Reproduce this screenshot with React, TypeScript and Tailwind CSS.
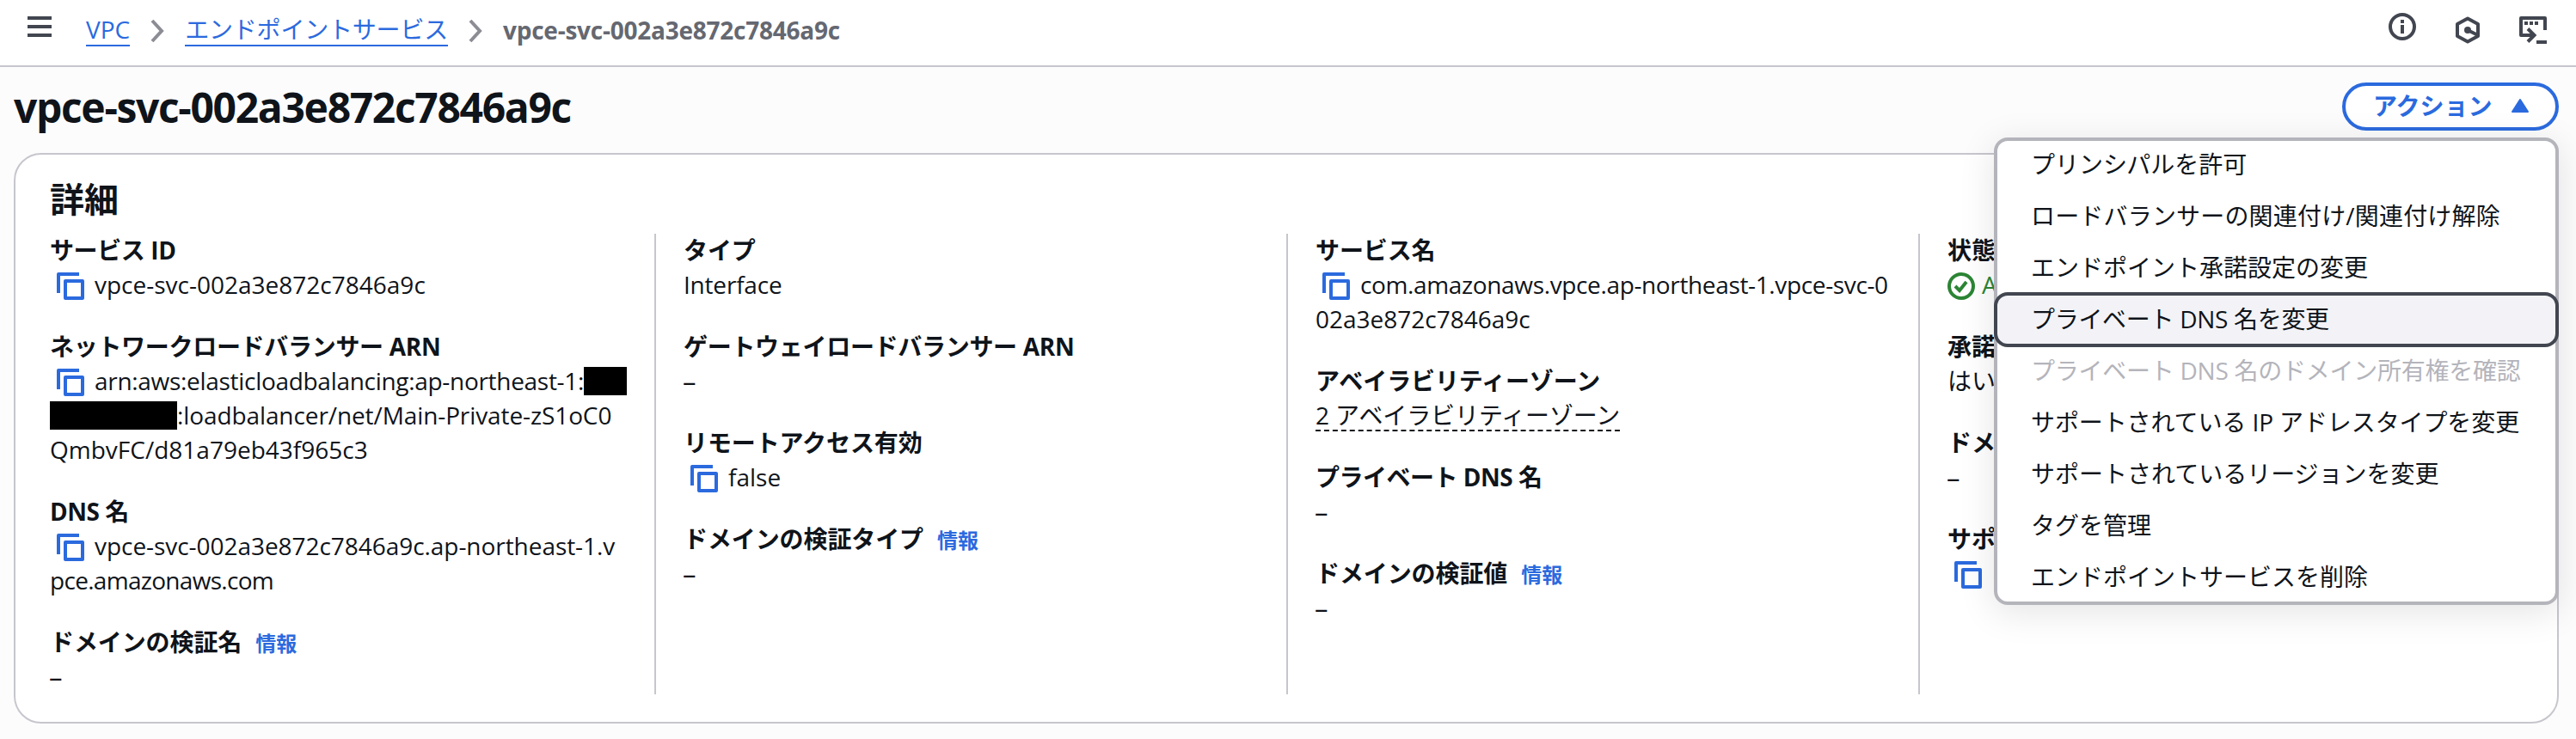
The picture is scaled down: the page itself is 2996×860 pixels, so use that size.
import type { ReactNode } from 'react'

type MenuItem = { text: string; state?: 'active' | 'disabled'; tracking?: string }

const MENU: MenuItem[] = [
  { text: 'プリンシパルを許可' },
  { text: 'ロードバランサーの関連付け/関連付け解除', tracking: 'tracking-[0.18px]' },
  { text: 'エンドポイント承諾設定の変更' },
  { text: 'プライベート DNS 名を変更', state: 'active', tracking: 'tracking-[-0.3px]' },
  { text: 'プライベート DNS 名のドメイン所有権を確認', state: 'disabled', tracking: 'tracking-[-0.25px]' },
  { text: 'サポートされている IP アドレスタイプを変更', tracking: 'tracking-[-0.1px]' },
  { text: 'サポートされているリージョンを変更' },
  { text: 'タグを管理' },
  { text: 'エンドポイントサービスを削除' },
]

function CopyIcon() {
  return (
    <svg viewBox="0 0 32 32" className="inline-block w-8 h-8 ml-2 mr-3 -mt-1 align-middle" fill="none" stroke="#2b6ade" strokeWidth="4" strokeLinejoin="round">
      <path d="M2 24V2h24" />
      <path d="M10 10h20v20H10z" />
    </svg>
  )
}

function Chevron() {
  return (
    <svg viewBox="0 0 16 28" className="w-4 h-7 shrink-0" fill="none" stroke="#8c8c94" strokeWidth="4">
      <path d="M2 2l11 12L2 26" />
    </svg>
  )
}

interface FieldProps {
  label:     string
  info?:     boolean
  tracking?: string
  children:  ReactNode
}

function Field({ label, info, tracking = 'tracking-[-0.1px]', children }: FieldProps) {
  return (
    <div className="leading-[38px]">
      <div className="h-10 font-bold">
        <span className={tracking}>{label}</span>
        {info && <a className="ml-4 text-[24px] font-semibold text-[#2b6ade]">情報</a>}
      </div>
      {children}
    </div>
  )
}

function Line({ className = '', children }: { className?: string; children: ReactNode }) {
  return <div className={`h-10 ${className}`}>{children}</div>
}

// 値なし
function Empty() {
  return <div className="h-10 -ml-px text-[31px] font-medium">–</div>
}

function Column({ first, children }: { first?: boolean; children: ReactNode }) {
  return (
    <div className={`flex flex-col gap-8 h-[536px] pl-8 ${first ? '' : 'border-l-2 border-[#c6c6cd]'}`}>
      {children}
    </div>
  )
}

export default function App() {
  return (
    <div className="w-[2996px] h-[860px] overflow-hidden bg-[#fcfcfd] text-[28px] text-[#0f141a] whitespace-nowrap font-['Open_Sans','Noto_Sans_CJK_JP',sans-serif]">
      {/* パンくずリスト */}
      <header className="flex items-center justify-between h-[78px] pl-8 pr-[34px] bg-white border-b-2 border-[#c6c6cd]">
        <div className="flex items-center h-10 -mt-1">
          <svg viewBox="0 0 28 24" className="w-7 h-6 mr-10 -mt-2.5" fill="#424650">
            <path d="M0 0h28v4H0zM0 10h28v4H0zM0 20h28v4H0z" />
          </svg>
          <a className="h-9 leading-[32px] text-[#2b6ade] border-b-2 border-[#2b6ade]">VPC</a>
          <span className="flex mx-6"><Chevron /></span>
          <a className="h-9 leading-[32px] tracking-[-0.2px] text-[#2b6ade] border-b-2 border-[#2b6ade]">エンドポイントサービス</a>
          <span className="flex mx-6"><Chevron /></span>
          <span className="-mt-0.5 font-bold tracking-[-0.24px] text-[#656871]">vpce-svc-002a3e872c7846a9c</span>
        </div>
        <div className="flex items-start gap-11 -mt-2.5">
          <svg viewBox="0 0 32 32" className="w-8 h-8" fill="none" stroke="#424650" strokeWidth="4">
            <circle cx="16" cy="16" r="14" />
            <path d="M16 14v10M16 8v4" />
          </svg>
          <svg viewBox="0 0 32 32" className="w-8 h-8 mt-1" fill="none" stroke="#424650" strokeWidth="4" strokeLinejoin="round">
            <path d="M16 2.500l12 6.500v14l-12 6.500L4 23V9z" />
            <path d="M16 16l12 6" />
            <circle cx="16" cy="16" r="4" fill="#424650" stroke="none" />
          </svg>
          <svg viewBox="0 0 32 32" className="w-8 h-8 mt-1" fill="none" stroke="#424650" strokeWidth="4">
            <path d="M30 16V2H2v20h15" strokeLinejoin="round" />
            <path d="M10 14.500l7.500 7.500-7.500 7.500M20 30h12" />
            <path d="M6 8h4M12 8h4M18 8h4" />
          </svg>
        </div>
      </header>

      <main className="pl-4 pr-5">
        <div className="flex items-center justify-between h-[100px]">
          <h1 className="-mt-1.5 text-[48px] font-bold tracking-[-1.33px]">vpce-svc-002a3e872c7846a9c</h1>
          <div className="relative -mt-2">
            <button className="flex items-center w-[252px] h-14 pl-8 pb-0.5 bg-white border-4 border-[#2b6ade] rounded-full font-bold text-[#2b6ade]">
              アクション
              <svg viewBox="0 0 20 16" className="w-5 h-4 ml-[22px]" fill="#2b6ade" stroke="#2b6ade" strokeWidth="2" strokeLinejoin="round">
                <path d="M10 1l9 14H1z" />
              </svg>
            </button>
            <ul className="absolute z-10 top-16 right-0 w-[657px] h-[544px] bg-white border-4 border-[#b4b4bb] rounded-2xl shadow-[0_8px_40px_2px_rgba(0,7,22,0.1)]">
              {MENU.map((item, i) => (
                <li
                  key={i}
                  className={`${
                    item.state === 'active'
                      ? 'relative -mx-1 -my-0.5 h-16 pl-[39px] leading-[54px] bg-[#f3f3f7] border-4 border-[#424650] rounded-2xl'
                      : item.state === 'disabled'
                        ? 'h-[60px] pl-[39px] leading-[58px] text-[#b4b4bb]'
                        : 'h-[60px] pl-[39px] leading-[58px] first:-mt-0.5'
                  } ${item.tracking ?? ''}`}
                >
                  {item.text}
                </li>
              ))}
            </ul>
          </div>
        </div>

        {/* 詳細パネル */}
        <section className="h-[664px] pt-[30px] bg-white border-2 border-[#c6c6cd] rounded-[32px]">
          <h2 className="h-[62px] pl-10 text-[40px] leading-[44px] font-bold">詳細</h2>
          <div className="grid grid-cols-4 ml-2 w-[2940px]">
            <Column first>
              <Field label="サービス ID" tracking="tracking-[-0.4px]">
                <Line><CopyIcon />vpce-svc-002a3e872c7846a9c</Line>
              </Field>
              <Field label="ネットワークロードバランサー ARN" tracking="tracking-[-0.3px]">
                <Line>
                  <CopyIcon /><span className="tracking-[-0.3px]">arn:aws:elasticloadbalancing:ap-northeast-1:</span>
                  <span className="inline-block w-[50px] h-[33px] -mt-1.5 bg-black align-middle" />
                </Line>
                <Line className="tracking-[-0.1px]">
                  <span className="inline-block w-[148px] h-[33px] -mt-1.5 bg-black align-middle" />
                  :loadbalancer/net/Main-Private-zS1oC0
                </Line>
                <Line>QmbvFC/d81a79eb43f965c3</Line>
              </Field>
              <Field label="DNS 名" tracking="tracking-[-0.5px]">
                <Line className="tracking-[-0.05px]"><CopyIcon />vpce-svc-002a3e872c7846a9c.ap-northeast-1.v</Line>
                <Line className="tracking-[-0.7px]">pce.amazonaws.com</Line>
              </Field>
              <Field label="ドメインの検証名" info><Empty /></Field>
            </Column>

            <Column>
              <Field label="タイプ"><Line className="tracking-[-0.2px]">Interface</Line></Field>
              <Field label="ゲートウェイロードバランサー ARN" tracking="tracking-[-0.3px]"><Empty /></Field>
              <Field label="リモートアクセス有効"><Line><CopyIcon />false</Line></Field>
              <Field label="ドメインの検証タイプ" info><Empty /></Field>
            </Column>

            <Column>
              <Field label="サービス名">
                <Line><CopyIcon /><span className="tracking-[-0.36px]">com.amazonaws.vpce.ap-northeast-1.vpce-svc-0</span></Line>
                <Line>02a3e872c7846a9c</Line>
              </Field>
              <Field label="アベイラビリティーゾーン">
                <Line>
                  <span className="inline-block h-[38px] tracking-[-0.1px] border-b-2 border-dashed border-[#0f141a]">2 アベイラビリティーゾーン</span>
                </Line>
              </Field>
              <Field label="プライベート DNS 名" tracking="tracking-[-0.5px]"><Empty /></Field>
              <Field label="ドメインの検証値" info><Empty /></Field>
            </Column>

            <Column>
              <Field label="状態">
                <Line>
                  <span className="text-[#2b8534]">
                    <svg viewBox="0 0 32 32" className="inline-block w-8 h-8 mr-2 -mt-1 align-middle" fill="none" stroke="currentColor" strokeWidth="4">
                      <circle cx="16" cy="16" r="14" />
                      <path d="M9 16l5 5 8-10" />
                    </svg>
                    A
                  </span>
                </Line>
              </Field>
              <Field label="承諾"><Line>はい</Line></Field>
              <Field label="ドメ"><Empty /></Field>
              <Field label="サポ"><Line><CopyIcon /></Line></Field>
            </Column>
          </div>
        </section>
      </main>
    </div>
  )
}
